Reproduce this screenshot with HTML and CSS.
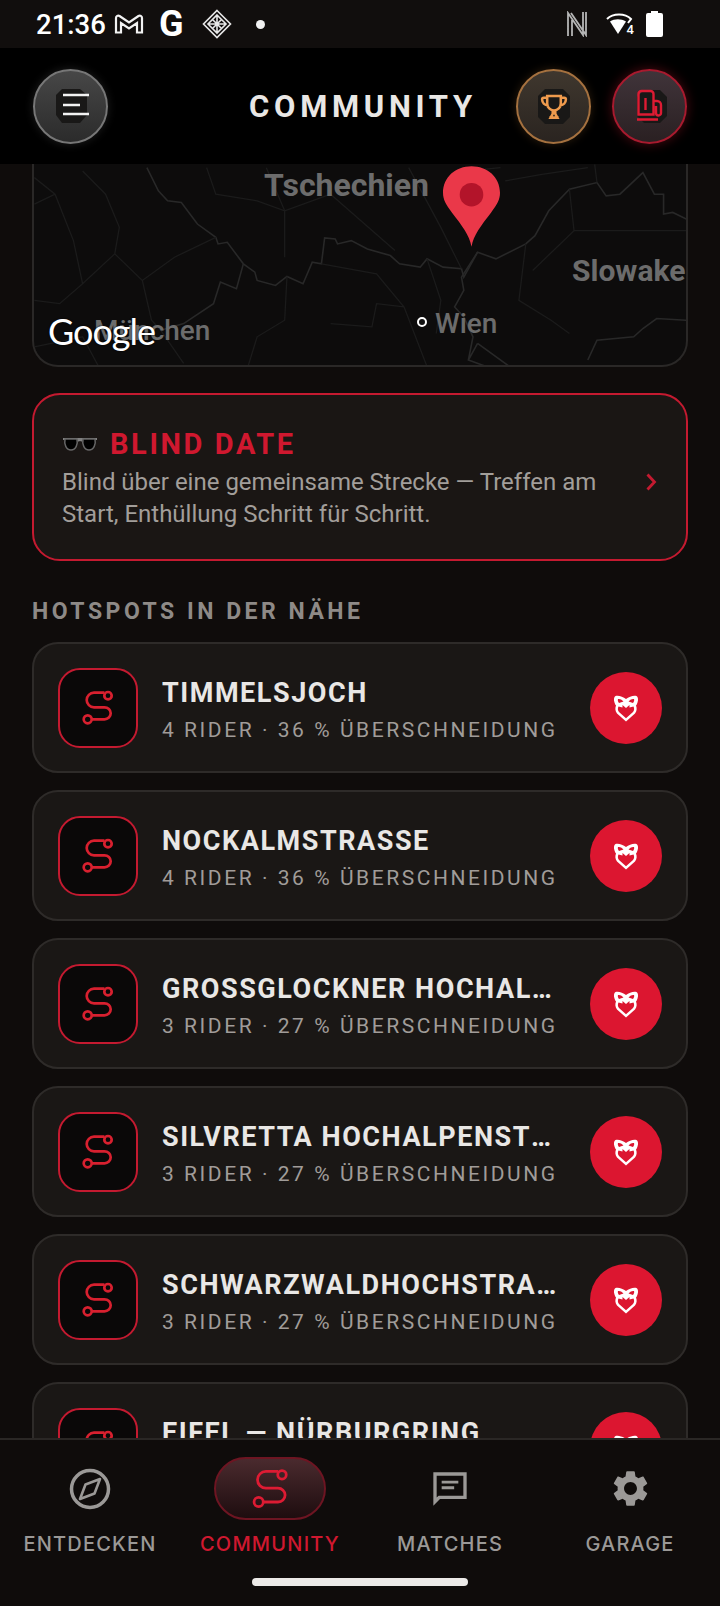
FILE: index.html
```html
<!DOCTYPE html>
<html lang="de">
<head>
    <meta charset="UTF-8">
    <meta name="viewport" content="width=device-width, initial-scale=1.0">
    <title>Community</title>
    <link rel="stylesheet" href="styles.css">
</head>
<body>
    <svg class="defs" width="0" height="0">
        <symbol id="route" viewBox="24 20 32 40">
            <circle cx="50" cy="27.700" r="3.700"/>
            <circle cx="29.700" cy="51.300" r="4"/>
            <path d="M46.500 24.700H36a7.300 7.300 0 0 0 0 14.600h10.500a6.200 6 0 0 1 0 12H33.700"/>
        </symbol>
        <symbol id="heart" viewBox="0 0 26 28">
            <path class="heart-fill" d="M13 5C10 2.500 5 1 2.500 2 .8 3 .5 6 1.500 8.500 2 10 2.500 11 3 11.500 2 14 2 17 4 19.500l9 8 9-8c2-2.500 2-5.500 1-8 .5-.5 1-1.500 1.500-3 1-2.500.7-5.500-1-6.500C21 1 16 2.500 13 5zM5 5c2-.5 4.500 1 5.500 2.500L6 9C5 8 4.500 6 5 5zm16 0c-2-.5-4.500 1-5.500 2.500L20 9c1-1 1.500-3 1-4zM5.500 12.500l4 1V11l3.500 3 3.500-3v2.500l4-1c1 2 .8 4-.5 5.500L13 24.300 6 18c-1.300-1.500-1.500-3.500-.5-5.500z"/>
        </symbol>
    </svg>

    <div class="status">
        <div class="status-left">
            <span class="clock">21:36</span>
            <svg class="st-gmail" width="30" height="24" viewBox="0 0 30 24"><path d="M2 20.500V6c0-2 2-3 3.500-2L15 10.500 24.500 4c1.500-1 3.500 0 3.500 2v14.500h-5V11l-8 5.500L7 11v9.500z"/></svg>
            <span class="st-g">G</span>
            <svg class="st-diamond" width="30" height="30" viewBox="0 0 30 30"><path d="M15 1.500 28.500 15 15 28.500 1.500 15zM15 6 24 15 15 24 6 15zM10.500 10.500l9 9M19.500 10.500l-9 9M15 6v18M6 15h18"/></svg>
            <span class="st-dot"></span>
        </div>
        <div class="status-right">
            <svg class="st-n" width="22" height="26" viewBox="0 0 22 26"><path d="M2 25V2L17 24V1M6 25V9M20 1v23L5 2"/></svg>
            <div class="st-wifi">
                <svg width="28" height="24" viewBox="0 0 28 24"><path class="wifi-fill" d="M13 22 5 9.500c4.500-3 11-3 16 0z"/><path class="wifi-arc" d="M2 7c6-6 18-6 24 0l-3 4"/></svg>
                <span>4</span>
            </div>
            <svg width="17" height="26" viewBox="0 0 17 26"><path class="st-fill" d="M5 0h7v2h3a2 2 0 0 1 2 2v20a2 2 0 0 1-2 2H2a2 2 0 0 1-2-2V4a2 2 0 0 1 2-2h3z"/></svg>
        </div>
    </div>

    <header class="topbar">
        <div class="topbar-left">
            <button class="round-btn round-grey">
                <svg width="40" height="40" viewBox="0 0 40 40">
                    <polygon class="octa" points="9,3 27,3 34,9 34,29 27,37 9,37 3,29 3,9"/>
                    <path class="menu-lines" d="M10 9h26M10 19h17M10 28h26"/>
                </svg>
            </button>
        </div>
        <h1 class="title">COMMUNITY</h1>
        <div class="topbar-right">
            <button class="round-btn round-gold">
                <svg width="40" height="40" viewBox="0 0 40 40">
                    <polygon class="octa" points="11,3 29,3 36,10 36,31 29,38 11,38 4,31 4,10"/>
                    <g transform="translate(3 4) scale(.85)">
                        <path class="trophy" d="M12 7h16v9a8 8 0 0 1-16 0zM12 9H8a2 2 0 0 0-2 2c0 4 3 7 7 7M28 9h4a2 2 0 0 1 2 2c0 4-3 7-7 7M18.500 24v4l-2.500 4.500h8L21.500 28v-4M14.500 32.500h11"/>
                    </g>
                </svg>
            </button>
            <button class="round-btn round-red">
                <svg width="40" height="40" viewBox="0 0 40 40">
                    <polygon class="octa" points="14,4 30,4 37,11 37,30 30,37 14,37 7,30 7,11"/>
                    <path class="pump" d="M11.500 5h9a3 3 0 0 1 3 3v20.500h-15V8a3 3 0 0 1 3-3zM15.500 12v12M24 15h3a4 4 0 0 1 4 4v8a2.500 2.500 0 0 1-5 0v-7M7 33.500h21"/>
                </svg>
            </button>
        </div>
    </header>

    <main class="content">
        <section class="map">
            <svg class="map-lines" viewBox="72 9 1424 612" preserveAspectRatio="none">
                <path class="line-strong" d="M320 20 345 90 365 120 395 125 430 190 470 230 475 250 495 245 530 310 555 335 560 360 600 375 625 348 660 370 680 305 700 310 707 232 730 235 735 250 765 240 800 265 850 285 870 310 915 320 930 295 965 320 1005 325 1010 350 1040 275 1080 295 1145 250 1165 225 1195 150 1240 85 1300 65 1320 105 1350 100 1400 35 1425 100 1445 100 1445 160 1465 155 1495 175"/>
                <path class="line-strong" d="M1040 275 1005 350 1010 390 990 440 1010 470 1030 530 1020 600 1060 620M1040 550 1020 600M1040 550 1110 620M530 310 515 385 480 365 465 430 400 490 350 510"/>
                <path class="line-strong" d="M1495 480 1430 475 1400 505 1380 530 1300 540 1280 600"/>
                <path class="line-faint" d="M75 50 120 100 160 240 180 370 250 280 310 360 380 290 470 230M120 100 75 130M180 370 130 430 75 420M250 280 260 200 230 100 180 30M310 360 330 480 350 510 400 610M625 348 620 480 560 530 540 620M700 310 820 340 880 440 930 620M880 440 820 430 810 500 720 490M1145 250 1130 420 1200 480 1240 520M930 295 960 420 950 520M620 150 580 20M620 150 620 290M720 100 860 270M1300 65 1295 10M1100 60 1180 40 1280 20M1250 210 1495 210M1240 85 1250 210 1160 330"/>
                <path class="line-faint" d="M450 20 470 100 560 120 620 150 720 100M890 20 960 200 1005 325M75 560 180 530 215 620M1020 30 1090 20"/>
            </svg>
            <span class="map-label map-tsch">Tschechien</span>
            <span class="map-label map-slow">Slowakei</span>
            <span class="map-label map-muen">München</span>
            <span class="map-label map-wien">Wien</span>
            <span class="map-dot"></span>
            <span class="map-google">Google</span>
            <svg class="map-pin" width="57" height="81" viewBox="0 0 58 82">
                <path class="pin-body" d="M29 82C27 70 19 60 9 47 3 39 0 34 0 27 0 11 13 0 29 0s29 11 29 27c0 7-3 12-9 20-10 13-18 23-20 35z"/>
                <circle class="pin-dot" cx="29" cy="29" r="12"/>
            </svg>
        </section>

        <section class="blind">
            <div class="blind-text">
                <div class="blind-head">
                    <svg width="36" height="16" viewBox="0 0 36 16">
                        <path class="glasses-frame" d="M1 3h34M16 5c1-1 3-1 4 0"/>
                        <path class="glasses-lens" d="M3 3h12c1 5-1 11-6 11S2 8 3 3zM21 3h12c1 5-1 11-6 11s-7-6-6-11z"/>
                    </svg>
                    <h2 class="blind-title">BLIND DATE</h2>
                </div>
                <p class="blind-desc">Blind über eine gemeinsame Strecke — Treffen am Start, Enthüllung Schritt für Schritt.</p>
            </div>
            <svg class="chevron" width="12" height="18" viewBox="0 0 12 18"><path d="M2.500 1.500 9.500 9l-7 7.500"/></svg>
        </section>

        <h3 class="section-label">HOTSPOTS IN DER NÄHE</h3>

        <div class="spots">
            <article class="spot">
                <div class="spot-icon"><svg class="route-small"><use href="#route"/></svg></div>
                <div class="spot-text">
                    <div class="spot-name">TIMMELSJOCH</div>
                    <div class="spot-meta">4 RIDER · 36 % ÜBERSCHNEIDUNG</div>
                </div>
                <button class="spot-btn"><svg width="26" height="28"><use href="#heart"/></svg></button>
            </article>
            <article class="spot">
                <div class="spot-icon"><svg class="route-small"><use href="#route"/></svg></div>
                <div class="spot-text">
                    <div class="spot-name">NOCKALMSTRASSE</div>
                    <div class="spot-meta">4 RIDER · 36 % ÜBERSCHNEIDUNG</div>
                </div>
                <button class="spot-btn"><svg width="26" height="28"><use href="#heart"/></svg></button>
            </article>
            <article class="spot">
                <div class="spot-icon"><svg class="route-small"><use href="#route"/></svg></div>
                <div class="spot-text">
                    <div class="spot-name">GROSSGLOCKNER HOCHALPENSTRASSE</div>
                    <div class="spot-meta">3 RIDER · 27 % ÜBERSCHNEIDUNG</div>
                </div>
                <button class="spot-btn"><svg width="26" height="28"><use href="#heart"/></svg></button>
            </article>
            <article class="spot">
                <div class="spot-icon"><svg class="route-small"><use href="#route"/></svg></div>
                <div class="spot-text">
                    <div class="spot-name">SILVRETTA HOCHALPENSTRASSE</div>
                    <div class="spot-meta">3 RIDER · 27 % ÜBERSCHNEIDUNG</div>
                </div>
                <button class="spot-btn"><svg width="26" height="28"><use href="#heart"/></svg></button>
            </article>
            <article class="spot">
                <div class="spot-icon"><svg class="route-small"><use href="#route"/></svg></div>
                <div class="spot-text">
                    <div class="spot-name">SCHWARZWALDHOCHSTRASSE</div>
                    <div class="spot-meta">3 RIDER · 27 % ÜBERSCHNEIDUNG</div>
                </div>
                <button class="spot-btn"><svg width="26" height="28"><use href="#heart"/></svg></button>
            </article>
            <article class="spot">
                <div class="spot-icon"><svg class="route-small"><use href="#route"/></svg></div>
                <div class="spot-text">
                    <div class="spot-name">EIFEL — NÜRBURGRING</div>
                    <div class="spot-meta">3 RIDER · 27 % ÜBERSCHNEIDUNG</div>
                </div>
                <button class="spot-btn"><svg width="26" height="28"><use href="#heart"/></svg></button>
            </article>
        </div>
    </main>

    <nav class="tabs">
        <div class="tab">
            <div class="tab-icon">
                <svg width="42" height="42" viewBox="0 0 42 42">
                    <circle class="icon-line" cx="21" cy="21" r="18.500"/>
                    <path class="icon-line thin" d="M31 11 25.500 25.500 11 31 16.500 16.500z"/>
                </svg>
            </div>
            <span class="tab-label">ENTDECKEN</span>
        </div>
        <div class="tab tab-active">
            <div class="tab-pill"><svg class="route-large"><use href="#route"/></svg></div>
            <span class="tab-label">COMMUNITY</span>
        </div>
        <div class="tab">
            <div class="tab-icon">
                <svg width="40" height="40" viewBox="0 0 24 24">
                    <path class="icon-fill" d="M22 2H2v20l4-4h16zM20 16H5.170L4 17.170V4h16zM7 7h10v1.700H7zM7 10.400h7.500v1.700H7z"/>
                </svg>
            </div>
            <span class="tab-label">MATCHES</span>
        </div>
        <div class="tab">
            <div class="tab-icon">
                <svg width="43" height="43" viewBox="0 0 24 24">
                    <path class="icon-fill" d="M19.140 12.940c.04-.3.06-.61.06-.94 0-.32-.02-.64-.07-.94l2.030-1.580c.18-.14.23-.41.12-.61l-1.920-3.320c-.12-.22-.37-.29-.59-.22l-2.390.96c-.5-.38-1.030-.7-1.620-.94l-.36-2.540c-.04-.24-.24-.41-.48-.41h-3.840c-.24 0-.43.17-.47.41l-.36 2.540c-.59.24-1.130.57-1.620.94l-2.390-.96c-.22-.08-.47 0-.59.22L2.740 8.870c-.12.21-.08.47.12.61l2.030 1.580c-.05.3-.09.63-.09.94s.02.64.07.94l-2.030 1.580c-.18.14-.23.41-.12.61l1.920 3.320c.12.22.37.29.59.22l2.390-.96c.5.38 1.030.7 1.620.94l.36 2.540c.05.24.24.41.48.41h3.840c.24 0 .44-.17.47-.41l.36-2.540c.59-.24 1.130-.56 1.620-.94l2.390.96c.22.08.47 0 .59-.22l1.920-3.320c.12-.22.07-.47-.12-.61l-2.010-1.580zM12 15.600c-1.980 0-3.600-1.620-3.600-3.600s1.620-3.600 3.600-3.600 3.600 1.620 3.600 3.600-1.620 3.600-3.600 3.600z"/>
                </svg>
            </div>
            <span class="tab-label">GARAGE</span>
        </div>
        <div class="home-bar"></div>
    </nav>
</body>
</html>
```

FILE: styles.css
```css
* {
    box-sizing: border-box;
}
html, body {
    margin: 0;
    height: 100%;
}
body {
    display: flex;
    flex-direction: column;
    height: 100vh;
    overflow: hidden;
    background: #0f0c0b;
    color: #e9e7e5;
    font-family: Roboto, "Liberation Sans", sans-serif;
}
.defs {
    position: absolute;
}
button {
    border: none;
    padding: 0;
    background: none;
}

/* status bar */
.status {
    flex: none;
    display: flex;
    justify-content: space-between;
    align-items: center;
    height: 48px;
    padding: 0 57px 0 36px;
    background: #110e0d;
}
.status-left, .status-right {
    display: flex;
    align-items: center;
}
.clock {
    padding-top: 1px;
    font-size: 27.500px;
    font-weight: 500;
    color: #fff;
    width: 78px;
}
.st-gmail path {
    fill: none;
    stroke: #f2f2f2;
    stroke-width: 2.200;
}
.st-g {
    margin-left: 15px;
    width: 43px;
    font-size: 36px;
    font-weight: 700;
    color: #fff;
}
.st-diamond path {
    fill: none;
    stroke: #e8e8e8;
    stroke-width: 1.600;
}
.st-dot {
    width: 9px;
    height: 9px;
    margin-left: 24px;
    border-radius: 50%;
    background: #f2f2f2;
}
.st-n path {
    fill: none;
    stroke: #b5b5b5;
    stroke-width: 1.800;
}
.st-wifi {
    position: relative;
    margin: 0 13px 0 17px;
    width: 28px;
    height: 24px;
}
.st-wifi span {
    position: absolute;
    right: -1px;
    bottom: -1px;
    font-size: 13px;
    font-weight: 500;
    color: #fff;
}
.wifi-fill, .st-fill {
    fill: #fff;
}
.wifi-arc {
    fill: none;
    stroke: #fff;
    stroke-width: 2;
}

/* header */
.topbar {
    flex: none;
    display: grid;
    grid-template-columns: 1fr auto 1fr;
    align-items: center;
    height: 116px;
    padding: 0 33px;
    background: #000;
}
.topbar-right {
    display: flex;
    justify-content: flex-end;
    gap: 21px;
}
.title {
    margin: 0;
    padding: 1px 0 0 6px;
    font-size: 31px;
    font-weight: 700;
    letter-spacing: 4.700px;
    color: #e9e7e5;
}
.round-btn {
    display: flex;
    align-items: center;
    justify-content: center;
    width: 75px;
    height: 75px;
    border-radius: 50%;
    border: 2px solid #777;
}
.round-grey {
    padding-left: 4px;
    background: linear-gradient(#474747, #2b2b2b);
    box-shadow: 0 0 10px rgba(255, 255, 255, 0.12);
}
.round-gold {
    border-color: #a5713f;
    background: linear-gradient(#3f372e, #2a2420);
    box-shadow: 0 0 10px rgba(200, 130, 60, 0.22);
}
.round-red {
    border-color: #a81a2e;
    background: linear-gradient(#40343a, #2a2022);
    box-shadow: 0 0 12px rgba(220, 30, 50, 0.35);
}
.octa {
    fill: #191817;
}
.menu-lines {
    fill: none;
    stroke: #f2f2f2;
    stroke-width: 2.600;
}
.trophy {
    fill: none;
    stroke: #ee9a4d;
    stroke-width: 3;
}
.pump {
    fill: none;
    stroke: #dd1b33;
    stroke-width: 2.400;
}

/* page content */
.content {
    flex: 1;
    min-height: 0;
    overflow: hidden;
    padding: 0 32px;
}

/* map */
.map {
    position: relative;
    height: 203px;
    overflow: hidden;
    border: 2px solid #2a2827;
    border-top: 0;
    border-radius: 0 0 26px 26px;
    background: #0d0c0c;
}
.map-lines {
    position: absolute;
    left: -1px;
    top: 0;
    width: 654px;
    height: 203px;
}
.line-strong, .line-faint {
    fill: none;
    vector-effect: non-scaling-stroke;
}
.line-strong {
    stroke: #282828;
    stroke-width: 1.600;
}
.line-faint {
    stroke: #1b1b1b;
    stroke-width: 1.300;
}
.map-label {
    position: absolute;
    color: #6c6c6c;
    white-space: nowrap;
}
.map-tsch {
    left: 230px;
    top: 2px;
    font-size: 32px;
    font-weight: 700;
}
.map-slow {
    left: 538px;
    top: 89px;
    font-size: 30px;
    font-weight: 700;
}
.map-muen {
    left: 60px;
    top: 150px;
    font-size: 28px;
    font-weight: 500;
}
.map-wien {
    left: 401px;
    top: 143px;
    font-size: 28px;
    font-weight: 500;
}
.map-dot {
    position: absolute;
    left: 383px;
    top: 153px;
    width: 10px;
    height: 10px;
    border: 2px solid #fff;
    border-radius: 50%;
    background: #111;
}
.map-google {
    position: absolute;
    left: 14px;
    top: 145px;
    font-family: Lato, sans-serif;
    font-size: 36px;
    font-weight: 400;
    letter-spacing: -1px;
    color: #fff;
    text-shadow: 0 0 2px #000;
}
.map-pin {
    position: absolute;
    left: 409px;
    top: 2px;
}
.pin-body {
    fill: #ea3849;
}
.pin-dot {
    fill: #b3142a;
}

/* blind date */
.blind {
    display: flex;
    align-items: center;
    justify-content: space-between;
    height: 168px;
    margin-top: 26px;
    padding: 0 29px 0 28px;
    border: 2px solid #c41a30;
    border-radius: 28px;
    background: #1a1614;
}
.blind-text {
    width: 550px;
    padding-top: 2px;
}
.blind-head {
    display: flex;
    align-items: center;
    gap: 12px;
}
.glasses-frame {
    fill: none;
    stroke: #808080;
    stroke-width: 1.800;
}
.glasses-lens {
    fill: #000;
    stroke: #666;
    stroke-width: 1.500;
}
.blind-title {
    margin: 0;
    font-size: 29px;
    font-weight: 700;
    letter-spacing: 2.600px;
    line-height: 36px;
    color: #d0182f;
}
.blind-desc {
    margin: 4px 0 0;
    font-size: 24px;
    line-height: 32px;
    color: #a29e9a;
}
.chevron {
    margin-top: 9px;
}
.chevron path {
    fill: none;
    stroke: #c41a30;
    stroke-width: 2.800;
}

/* hotspots */
.section-label {
    margin: 38px 0 17px;
    font-size: 23px;
    font-weight: 700;
    line-height: 26px;
    letter-spacing: 3.500px;
    color: #8e8a87;
}
.spots {
    display: flex;
    flex-direction: column;
    gap: 17px;
}
.spot {
    flex: none;
    display: flex;
    align-items: center;
    gap: 24px;
    height: 131px;
    padding: 0 24px;
    border: 2px solid #2e2b29;
    border-radius: 26px;
    background: #1a1715;
}
.spot-icon {
    flex: none;
    display: flex;
    align-items: center;
    justify-content: center;
    width: 80px;
    height: 80px;
    border: 2px solid #c41a30;
    border-radius: 22px;
    background: #0a0808;
}
.route-small {
    width: 32px;
    height: 40px;
    fill: none;
    stroke: #d8202f;
    stroke-width: 2.700;
}
.spot-text {
    flex: 1;
    min-width: 0;
    padding: 8px 5px 0 0;
}
.spot-name {
    overflow: hidden;
    white-space: nowrap;
    text-overflow: ellipsis;
    font-size: 27px;
    font-weight: 700;
    letter-spacing: 1.550px;
    line-height: 36px;
    color: #e9e7e5;
}
.spot-meta {
    margin-top: 1px;
    white-space: nowrap;
    font-size: 21px;
    letter-spacing: 2.550px;
    line-height: 36px;
    color: #a09c99;
}
.spot-btn {
    flex: none;
    display: flex;
    align-items: center;
    justify-content: center;
    width: 72px;
    height: 72px;
    border-radius: 50%;
    background: #dc1630;
}
.heart-fill {
    fill: #fff;
    fill-rule: evenodd;
}

/* bottom nav */
.tabs {
    position: relative;
    flex: none;
    display: grid;
    grid-template-columns: repeat(4, 1fr);
    height: 168px;
    border-top: 2px solid #2a2725;
    background: #0f0c0b;
}
.tab {
    display: flex;
    flex-direction: column;
    align-items: center;
    padding-top: 17px;
}
.tab-icon, .tab-pill {
    display: flex;
    align-items: center;
    justify-content: center;
    width: 112px;
    height: 63px;
}
.tab-pill {
    border: 2px solid #6d1522;
    border-radius: 32px;
    background: linear-gradient(#4a2a2e, #1e0d0f);
}
.route-large {
    width: 37px;
    height: 46px;
    fill: none;
    stroke: #dd1b33;
    stroke-width: 2.400;
}
.icon-line {
    fill: none;
    stroke: #9b9997;
    stroke-width: 3.500;
}
.icon-line.thin {
    stroke-width: 2.600;
    stroke-linejoin: round;
}
.icon-fill {
    fill: #9b9997;
    fill-rule: evenodd;
}
.tab-label {
    margin-top: 11px;
    font-family: Inter, Roboto, sans-serif;
    font-size: 20px;
    font-weight: 500;
    letter-spacing: 1.200px;
    line-height: 26px;
    color: #9b9997;
}
.tab-active .tab-label {
    color: #d0182f;
}
.home-bar {
    position: absolute;
    left: 252px;
    bottom: 20px;
    width: 216px;
    height: 8px;
    border-radius: 4px;
    background: #eceae8;
}
```
